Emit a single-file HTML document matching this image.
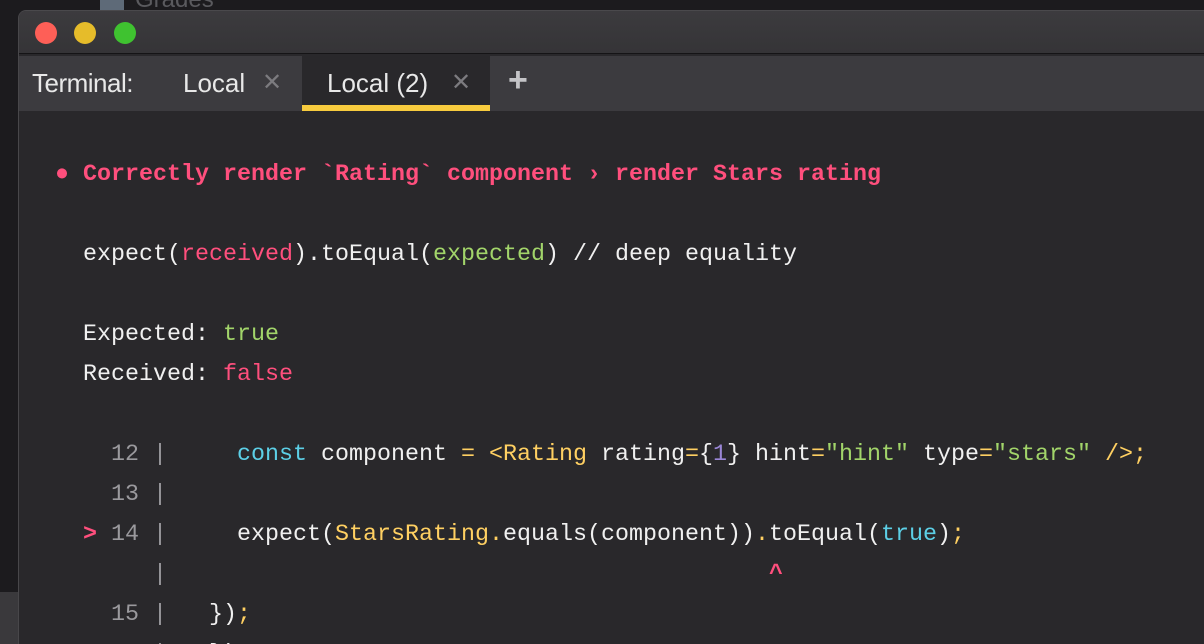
<!DOCTYPE html>
<html><head><style>
html,body{margin:0;padding:0;width:1204px;height:644px;overflow:hidden;background:#1c1b1e;position:relative;}
.bg{position:absolute;left:0;top:0;width:1204px;height:644px;background:#1c1b1e;}
.side{position:absolute;left:0;top:592px;width:18px;height:52px;background:#3a393c;}
.grades{position:absolute;left:135px;top:-14px;font:24px "Liberation Sans",sans-serif;color:#5a5a5e;}
.gicon{position:absolute;left:100px;top:0;width:24px;height:10px;background:#5e6a78;}
.win{position:absolute;left:18px;top:10px;width:1186px;height:634px;background:#29282b;border-radius:8px 0 0 0;border-left:1px solid #48474a;border-top:1px solid #4a494c;overflow:hidden;}
.title{position:absolute;left:0;top:0;right:0;height:42px;background:linear-gradient(#3c3b3e,#353437);border-bottom:1px solid #151416;}
.dot{position:absolute;top:11px;width:22px;height:22px;border-radius:50%;}
.tabs{position:absolute;left:0;top:45px;right:0;height:55px;background:#3c3b3f;font:26px "Liberation Sans",sans-serif;color:#e8e8e8;}
.tabs span{position:absolute;top:12px;}
.x{color:#7c7b7f;font-size:24px;}
.active{position:absolute;left:283px;top:0;width:188px;height:55px;background:#29282b;}
.ul{position:absolute;left:283px;top:49px;width:188px;height:6px;background:#f7cb3e;}
.code{position:absolute;left:0;top:0;width:1204px;height:644px;overflow:hidden;font-family:"Liberation Mono",monospace;font-size:23.33px;color:#f0f0f0;white-space:pre;}
.l{position:absolute;left:83px;height:40px;line-height:40px;}
.p{color:#ff4f7d}.g{color:#a2d56a}.c{color:#5ccfe6}.y{color:#ffd062}.v{color:#9a86d6}.n{color:#9a999d}.b{font-weight:bold}
</style></head><body>
<div class="bg"></div>
<div class="gicon"></div>
<div class="grades">Grades</div>
<div class="side"></div>
<div class="win">
 <div class="title">
  <div class="dot" style="left:16px;background:#fe5f57"></div>
  <div class="dot" style="left:55px;background:#e6bc2a"></div>
  <div class="dot" style="left:95px;background:#3fc230"></div>
 </div>
 <div class="tabs">
  <div class="active"></div><div class="ul"></div>
  <span style="left:13px;letter-spacing:-0.5px">Terminal:</span>
  <span style="left:164px">Local</span>
  <span class="x" style="left:243px">✕</span>
  <span style="left:308px">Local (2)</span>
  <span class="x" style="left:432px">✕</span>
  <span style="left:489px;color:#c4c4c7;font-size:34px;font-weight:bold;top:5px">+</span>
 </div>
</div>
<div class="code">
<div class="l b p" style="top:155px;left:55px">● Correctly render `Rating` component › render Stars rating</div>
<div class="l" style="top:235px">expect(<span class="p">received</span>).toEqual(<span class="g">expected</span>) // deep equality</div>
<div class="l" style="top:315px">Expected: <span class="g">true</span></div>
<div class="l" style="top:355px">Received: <span class="p">false</span></div>
<div class="l" style="top:435px"><span class="n">  12 |</span>     <span class="c">const</span> component <span class="y">=</span> <span class="y">&lt;Rating</span> rating<span class="y">=</span>{<span class="v">1</span>} hint<span class="y">=</span><span class="g">"hint"</span> type<span class="y">=</span><span class="g">"stars"</span> <span class="y">/&gt;;</span></div>
<div class="l" style="top:475px"><span class="n">  13 |</span></div>
<div class="l" style="top:515px"><span class="p b">&gt;</span><span class="n"> 14 |</span>     expect(<span class="y">StarsRating.</span>equals(component))<span class="y">.</span>toEqual(<span class="c">true</span>)<span class="y">;</span></div>
<div class="l" style="top:555px"><span class="n">     |</span>                                           <span class="p b">^</span></div>
<div class="l" style="top:595px"><span class="n">  15 |</span>   })<span class="y">;</span></div>
<div class="l" style="top:635px"><span class="n">     |</span>   })</div>
</div>
</body></html>
